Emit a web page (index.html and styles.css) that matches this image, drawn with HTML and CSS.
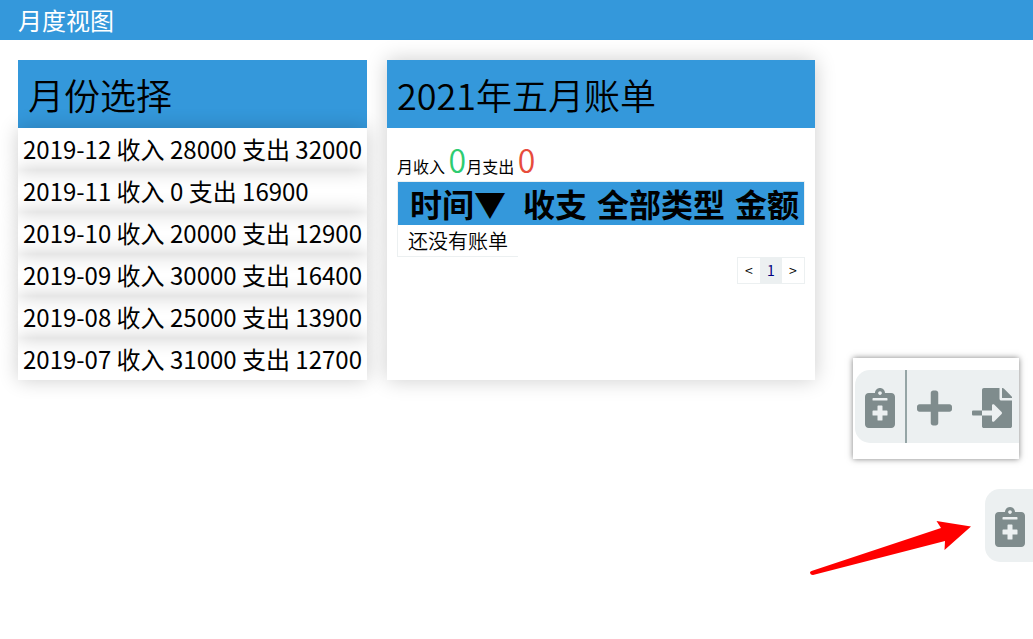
FILE: index.html
```html
<!DOCTYPE html>
<html lang="zh-CN">
<head>
<meta charset="utf-8">
<title>月度视图</title>
<link rel="stylesheet" href="styles.css">
</head>
<body>
<svg class="symbols" aria-hidden="true">
  <symbol id="notes" viewBox="0 0 384 512"><path d="M336 64h-80c0-35.3-28.7-64-64-64s-64 28.7-64 64H48C21.5 64 0 85.500 0 112v352c0 26.500 21.500 48 48 48h288c26.500 0 48-21.500 48-48V112c0-26.500-21.500-48-48-48zM192 40c13.300 0 24 10.700 24 24s-10.700 24-24 24-24-10.700-24-24 10.700-24 24-24zm96 304c0 4.400-3.600 8-8 8h-56v56c0 4.400-3.600 8-8 8h-48c-4.400 0-8-3.600-8-8v-56h-56c-4.400 0-8-3.600-8-8v-48c0-4.400 3.600-8 8-8h56v-56c0-4.400 3.600-8 8-8h48c4.400 0 8 3.600 8 8v56h56c4.400 0 8 3.600 8 8v48zm0-192c0 4.400-3.600 8-8 8H104c-4.400 0-8-3.600-8-8v-16c0-4.400 3.600-8 8-8h176c4.400 0 8 3.600 8 8v16z"/></symbol>
</svg>
<header class="topbar"><h1 class="topbar-title">月度视图</h1></header>
<main class="panels">
  <section class="panel">
    <h2 class="panel-title">月份选择</h2>
    <ul class="months">
      <li class="month">2019-12 收入 28000 支出 32000</li>
      <li class="month">2019-11 收入 0 支出 16900</li>
      <li class="month">2019-10 收入 20000 支出 12900</li>
      <li class="month">2019-09 收入 30000 支出 16400</li>
      <li class="month">2019-08 收入 25000 支出 13900</li>
      <li class="month">2019-07 收入 31000 支出 12700</li>
    </ul>
  </section>
  <section class="panel panel-raised">
    <h2 class="panel-title">2021年五月账单</h2>
    <div class="bill">
      <p class="totals">月收入 <span class="amount income">0</span>月支出 <span class="amount expense">0</span></p>
      <table class="records">
        <thead>
          <tr><th><button class="sort" type="button">时间▼</button></th><th>收支</th><th>全部类型</th><th>金额</th></tr>
        </thead>
        <tbody>
          <tr><td class="empty">还没有账单</td></tr>
        </tbody>
      </table>
      <nav class="pager" aria-label="分页">
        <button class="page" type="button">&lt;</button>
        <button class="page page-current" type="button">1</button>
        <button class="page" type="button">&gt;</button>
      </nav>
    </div>
  </section>
</main>
<aside class="preview">
  <div class="tools">
    <button class="tool tool-toggle" type="button" aria-label="账单"><svg class="icon icon-notes"><use href="#notes"/></svg></button>
    <button class="tool" type="button" aria-label="添加"><svg class="icon icon-plus" viewBox="0 0 448 512"><path d="M416 208H272V64c0-17.670-14.330-32-32-32h-32c-17.670 0-32 14.330-32 32v144H32c-17.670 0-32 14.330-32 32v32c0 17.670 14.330 32 32 32h144v144c0 17.670 14.330 32 32 32h32c17.670 0 32-14.330 32-32V304h144c17.670 0 32-14.330 32-32v-32c0-17.670-14.330-32-32-32z"/></svg></button>
    <button class="tool" type="button" aria-label="导入"><svg class="icon icon-import" viewBox="0 0 512 512"><path d="M16 288c-8.800 0-16 7.200-16 16v32c0 8.800 7.200 16 16 16h112v-64zm489-183L407.100 7c-4.500-4.500-10.600-7-17-7H384v128h128v-6.100c0-6.300-2.500-12.400-7-16.900zm-153 31V0H152c-13.300 0-24 10.700-24 24v264h128v-65.200c0-14.300 17.300-21.400 27.400-11.300L379 308c6.600 6.700 6.600 17.400 0 24l-95.700 96.400c-10.100 10.100-27.400 3-27.400-11.300V352H128v136c0 13.300 10.700 24 24 24h336c13.300 0 24-10.700 24-24V160H376c-13.200 0-24-10.800-24-24z"/></svg></button>
  </div>
</aside>
<svg class="arrow" viewBox="0 0 164 58" aria-hidden="true"><path d="M1.500 54L131 11 126.500 4 161 9.500 134.500 33 135 24 3 58Q0 58 0 55Z"/></svg>
<button class="tool dock" type="button" aria-label="账单"><svg class="icon icon-notes"><use href="#notes"/></svg></button>
</body>
</html>
```

FILE: styles.css
```css
* { box-sizing: border-box; }

body {
  margin: 0;
  min-height: 100vh;
  position: relative;
  background: #fff;
  color: #000;
  font-family: "Noto Sans CJK SC", sans-serif;
  font-weight: 400;
}

h1, h2, p, ul { margin: 0; padding: 0; font-weight: inherit; }

button {
  margin: 0;
  padding: 0;
  border: 0;
  background: none;
  color: inherit;
  font: inherit;
  cursor: pointer;
}

.symbols { display: none; }

.topbar {
  padding: 0 18px;
  background: #3498db;
  color: #fff;
}

.topbar-title {
  font-size: 24px;
  line-height: 40px;
}

.panels {
  display: grid;
  grid-template-columns: minmax(0, 349px) minmax(0, 428px);
  gap: 20px;
  padding: 20px 18px;
}

.panel-raised { box-shadow: 0 0 20px rgba(0, 0, 0, .2); }

.panel-title {
  padding: 10px;
  background: #3498db;
  font-size: 36px;
  font-weight: 350;
  line-height: 48px;
}

.months { list-style: none; }

.month {
  padding: 5px;
  box-shadow: 0 0 20px rgba(0, 0, 0, .2);
  font-size: 24px;
  line-height: 32px;
  white-space: nowrap;
}

.bill { padding: 10px; }

.totals {
  font-size: 16px;
  line-height: 16px;
}

.amount {
  font-size: 32px;
  font-weight: 350;
  line-height: 43px;
}

.income { color: #2ecc71; }
.expense { color: #e74c3c; }

.records {
  width: 100%;
  border: 1px solid #ecf0f1;
  border-width: 1px 0 0 1px;
  border-spacing: 0;
}

.records th {
  padding: 0 5px;
  background: #3498db;
  font-size: 32px;
  font-weight: 700;
  line-height: 43px;
  white-space: nowrap;
}

.records th:last-child { border-right: 1px solid #ecf0f1; }

.empty {
  padding: 0 10px;
  border-bottom: 1px solid #ecf0f1;
  font-size: 20px;
  font-weight: 350;
  line-height: 31px;
  white-space: nowrap;
}

.pager {
  display: flex;
  width: max-content;
  margin-left: auto;
  border: 1px solid #ecf0f1;
}

.page {
  width: 22px;
  font-size: 14px;
  line-height: 25px;
}

.page-current { background: #ecf0f1; color: #000080; }

.preview {
  position: absolute;
  top: 358px;
  right: 14px;
  padding: 12px 0 16px 2px;
  background: #fff;
  box-shadow: 0 0 6px rgba(0, 0, 0, .5);
}

.tools {
  display: flex;
  padding-right: 7px;
  border-radius: 15px 0 0 15px;
  background: #ecf0f1;
}

.tool {
  display: flex;
  padding: 18px 10px 15px;
}

.tool:last-child { padding-right: 0; }
.tool-toggle { border-right: 2px solid #95a5a6; }

.icon { height: 40px; fill: #7f8c8d; }
.icon-notes { width: 30px; }
.icon-plus { width: 35px; }
.icon-import { width: 40px; }

.arrow {
  position: absolute;
  top: 517px;
  right: 59px;
  width: 164px;
  height: 58px;
  fill: #f00;
}

.tool.dock {
  position: absolute;
  top: 489px;
  right: 0;
  padding-right: 8px;
  border-radius: 15px 0 0 15px;
  background: #ecf0f1;
}
```
